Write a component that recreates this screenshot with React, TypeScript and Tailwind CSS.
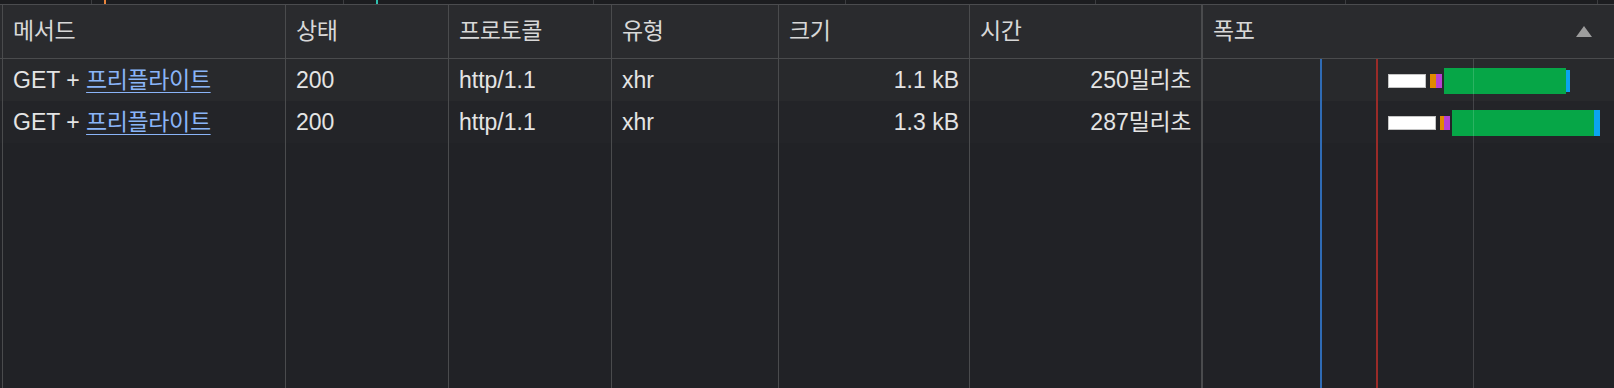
import React from 'react';

const line = 'border-l border-[#4a4b4d]';

const Ko: React.FC<{ children: React.ReactNode }> = ({ children }) => (
  <span className="tracking-[-0.4px]">{children}</span>
);

type Bar = { left: number; width: number; top: number; height: number; cls: string };

const rows = [
  {
    size: '1.1 kB',
    ms: '250',
    bars: [
      { left: 185, width: 38, top: 15, height: 14, cls: 'bg-white border border-[#c4c4c4]' },
      { left: 227, width: 6, top: 15, height: 14, cls: 'bg-[#e08a00]' },
      { left: 233, width: 6, top: 15, height: 14, cls: 'bg-[#b640d4]' },
      { left: 241, width: 122, top: 9, height: 26, cls: 'bg-[#06a647]' },
      { left: 363, width: 4, top: 11, height: 22, cls: 'bg-[#0aa4f0]' },
    ] as Bar[],
    bg: 'bg-[#28292c]',
  },
  {
    size: '1.3 kB',
    ms: '287',
    bars: [
      { left: 185, width: 48, top: 15, height: 14, cls: 'bg-white border border-[#c4c4c4]' },
      { left: 237, width: 4, top: 15, height: 14, cls: 'bg-[#e08a00]' },
      { left: 241, width: 6, top: 15, height: 14, cls: 'bg-[#b640d4]' },
      { left: 249, width: 142, top: 9, height: 26, cls: 'bg-[#06a647]' },
      { left: 391, width: 6, top: 9, height: 26, cls: 'bg-[#0aa4f0]' },
    ] as Bar[],
    bg: 'bg-[#232428]',
  },
];

// dom-content-loaded / load markers and a grid line, drawn through every body row
const Markers: React.FC = () => (
  <>
    <div className="absolute top-0 bottom-0 left-[117px] w-[2px] bg-[#2f6bb5]" />
    <div className="absolute top-0 bottom-0 left-[173px] w-[2px] bg-[#9a2b28]" />
    <div className="absolute top-0 bottom-0 left-[270px] w-px bg-white/15 z-10" />
  </>
);

const Cells: React.FC<{ row?: (typeof rows)[number] }> = ({ row }) => (
  <>
    <div className={`w-[283px] ${line} px-[10px] flex items-center`}>
      {row && (
        <span>
          GET +{' '}
          <span className="text-[#8ab4f8] underline underline-offset-[4px] decoration-1">
            <Ko>프리플라이트</Ko>
          </span>
        </span>
      )}
    </div>
    <div className={`w-[163px] ${line} px-[10px] flex items-center`}>{row && '200'}</div>
    <div className={`w-[163px] ${line} px-[10px] flex items-center`}>{row && 'http/1.1'}</div>
    <div className={`w-[167px] ${line} px-[10px] flex items-center`}>{row && 'xhr'}</div>
    <div className={`w-[191px] ${line} px-[10px] flex items-center justify-end`}>{row && row.size}</div>
    <div className={`w-[232px] ${line} pl-[10px] pr-[10px] flex items-center justify-end`}>
      {row && (
        <span>
          {row.ms}
          <Ko>밀리초</Ko>
        </span>
      )}
    </div>
    <div className="flex-1 border-l-2 border-[#4a4b4d] relative">
      {row &&
        row.bars.map((b, i) => (
          <div
            key={i}
            className={`absolute ${b.cls}`}
            style={{ left: b.left, width: b.width, top: b.top, height: b.height }}
          />
        ))}
      <Markers />
    </div>
  </>
);

const App: React.FC = () => {
  const ticks = [91, 343, 593, 845, 1095, 1345, 1597];
  return (
    <div className="w-[1614px] h-[388px] overflow-hidden bg-[#212226] flex flex-col text-[23px] text-[#e4e4e4] font-['Liberation_Sans','Noto_Sans_CJK_KR',sans-serif]">
      {/* overview strip above the table */}
      <div className="h-[4px] relative bg-[#1c1d20]">
        {ticks.map((x) => (
          <div key={x} className="absolute top-0 h-full w-px bg-[#3c3d40]" style={{ left: x }} />
        ))}
        <div className="absolute top-0 h-full w-[2px] bg-[#e8843c] left-[104px]" />
        <div className="absolute top-0 h-full w-[2px] bg-[#2fc0b0] left-[376px]" />
      </div>
      <div className="h-px bg-[#4b4c4f]" />

      {/* header */}
      <div className="flex h-[54px] pl-[2px] bg-[#2a2b2e] border-b border-[#4a4b4d] text-[#d8d8d8]">
        <div className={`w-[283px] ${line} px-[10px] flex items-center`}><Ko>메서드</Ko></div>
        <div className={`w-[163px] ${line} px-[10px] flex items-center`}><Ko>상태</Ko></div>
        <div className={`w-[163px] ${line} px-[10px] flex items-center`}><Ko>프로토콜</Ko></div>
        <div className={`w-[167px] ${line} px-[10px] flex items-center`}><Ko>유형</Ko></div>
        <div className={`w-[191px] ${line} px-[10px] flex items-center`}><Ko>크기</Ko></div>
        <div className={`w-[232px] ${line} px-[10px] flex items-center`}><Ko>시간</Ko></div>
        <div className="flex-1 border-l-2 border-[#4a4b4d] pl-[10px] pr-[22px] flex items-center justify-between">
          <Ko>폭포</Ko>
          <svg width="16" height="11" viewBox="0 0 16 11" className="mb-[1px]">
            <polygon points="8,0 16,11 0,11" fill="#9d9d9d" />
          </svg>
        </div>
      </div>

      {/* body */}
      <div className="flex-1 flex flex-col">
        {rows.map((r, i) => (
          <div key={i} className={`flex h-[42px] pl-[2px] ${r.bg}`}>
            <Cells row={r} />
          </div>
        ))}
        <div className="flex flex-1 pl-[2px]">
          <Cells />
        </div>
      </div>
    </div>
  );
};

export default App;
